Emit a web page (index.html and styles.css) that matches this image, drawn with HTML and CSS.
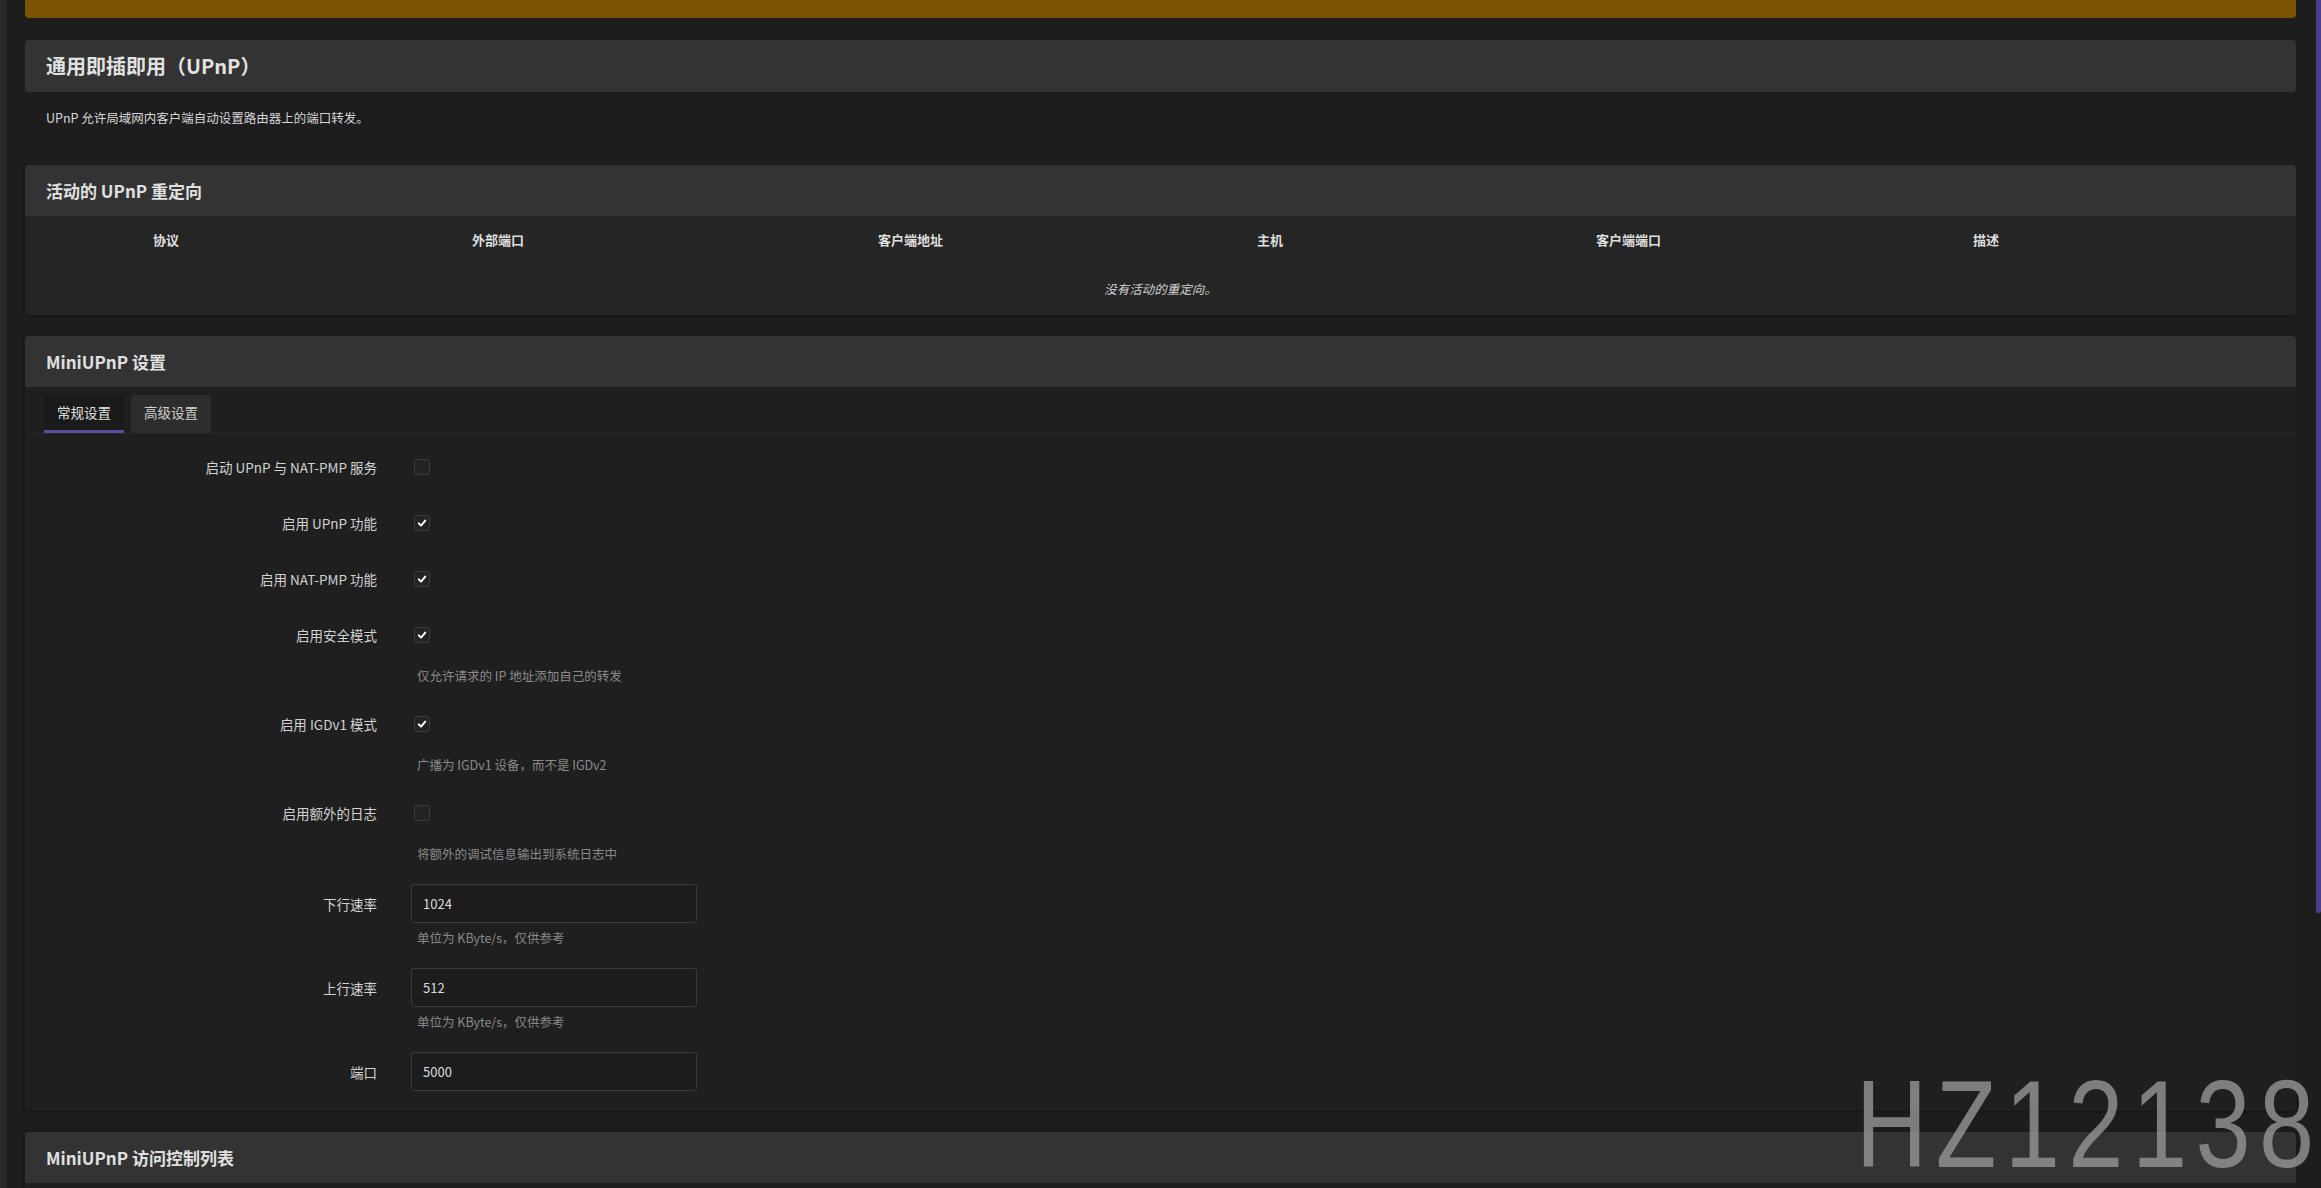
FILE: index.html
```html
<!DOCTYPE html>
<html lang="zh-CN">
<head>
	<meta charset="UTF-8">
	<title>通用即插即用（UPnP）</title>
	<link rel="stylesheet" href="styles.css">
</head>
<body>
<div class="edge"></div>
<div class="main">
	<div class="alert"></div>

	<h2 class="page-title">通用即插即用（UPnP）</h2>
	<div class="page-descr">UPnP 允许局域网内客户端自动设置路由器上的端口转发。</div>

	<!-- 活动的重定向 -->
	<div class="section">
		<h3>活动的 UPnP 重定向</h3>
		<div class="table">
			<div class="thead">
				<div>协议</div>
				<div>外部端口</div>
				<div>客户端地址</div>
				<div>主机</div>
				<div>客户端端口</div>
				<div>描述</div>
			</div>
			<div class="empty">没有活动的重定向。</div>
		</div>
	</div>

	<!-- 设置 -->
	<div class="section">
		<h3>MiniUPnP 设置</h3>
		<div class="section-body">
			<ul class="tabs">
				<li class="active">常规设置</li>
				<li>高级设置</li>
			</ul>
			<div class="form">
				<div class="row">
					<label>启动 UPnP 与 NAT-PMP 服务</label>
					<div class="field"><span class="check"></span></div>
				</div>
				<div class="row">
					<label>启用 UPnP 功能</label>
					<div class="field"><span class="check on"><svg viewBox="0 0 16 16"><path d="M4.3 8.4L6.9 11L11.7 5.3"/></svg></span></div>
				</div>
				<div class="row">
					<label>启用 NAT-PMP 功能</label>
					<div class="field"><span class="check on"><svg viewBox="0 0 16 16"><path d="M4.3 8.4L6.9 11L11.7 5.3"/></svg></span></div>
				</div>
				<div class="row">
					<label>启用安全模式</label>
					<div class="field"><span class="check on"><svg viewBox="0 0 16 16"><path d="M4.3 8.4L6.9 11L11.7 5.3"/></svg></span></div>
					<div class="descr">仅允许请求的 IP 地址添加自己的转发</div>
				</div>
				<div class="row">
					<label>启用 IGDv1 模式</label>
					<div class="field"><span class="check on"><svg viewBox="0 0 16 16"><path d="M4.3 8.4L6.9 11L11.7 5.3"/></svg></span></div>
					<div class="descr">广播为 IGDv1 设备，而不是 IGDv2</div>
				</div>
				<div class="row">
					<label>启用额外的日志</label>
					<div class="field"><span class="check"></span></div>
					<div class="descr">将额外的调试信息输出到系统日志中</div>
				</div>
				<div class="row text">
					<label>下行速率</label>
					<div class="field"><input type="text" value="1024"></div>
					<div class="descr">单位为 KByte/s，仅供参考</div>
				</div>
				<div class="row text">
					<label>上行速率</label>
					<div class="field"><input type="text" value="512"></div>
					<div class="descr">单位为 KByte/s，仅供参考</div>
				</div>
				<div class="row text">
					<label>端口</label>
					<div class="field"><input type="text" value="5000"></div>
				</div>
			</div>
		</div>
	</div>

	<div class="section">
		<h3>MiniUPnP 访问控制列表</h3>
		<div class="section-body tall"></div>
	</div>
</div>
<div class="scrollbar"><div class="thumb"></div></div>

<div class="watermark">HZ12138</div>
</body>
</html>
```

FILE: styles.css
```css
html, body{
	margin: 0;
	height: 100%;
}
body{
	display: flex;
	overflow: hidden;
	background: #1d1d1d;
	color: #d0d0d0;
	font-family: "Noto Sans CJK SC", "Noto Sans", sans-serif;
	font-size: 14px;
}
.edge{
	width: 7px;
	flex-shrink: 0;
	background: #292929;
}
.main{
	flex: 1;
	padding: 0 20px 0 18px;
	min-width: 0;
}
.scrollbar{
	width: 5px;
	flex-shrink: 0;
}
.scrollbar .thumb{
	height: 913px;
	background: #4b3f8c;
	border-radius: 0 0 3px 3px;
}

.alert{
	height: 18px;
	margin-bottom: 22px;
	background: #7a5200;
	border-radius: 0 0 4px 4px;
}
.page-title{
	margin: 0;
	height: 52px;
	line-height: 52px;
	padding: 0 21px;
	background: #333;
	border-radius: 4px;
	font-size: 20px;
	font-weight: bold;
	color: #e2e2e2;
}
.page-descr{
	padding: 17px 21px 0;
	line-height: 18px;
	margin-bottom: 38px;
	font-size: 12.5px;
	color: #d6d6d6;
}

.section{
	margin-bottom: 21px;
	border-radius: 4px;
	background: #1f1f1f;
	box-shadow: 0 1px 3px rgba(0,0,0,.35);
}
.section h3{
	margin: 0;
	height: 51px;
	line-height: 51px;
	padding: 0 21px;
	background: #333;
	border-radius: 4px 4px 0 0;
	font-size: 17px;
	font-weight: bold;
	color: #e0e0e0;
}

.table{
	background: #252525;
	border-radius: 0 0 4px 4px;
}
.thead{
	display: grid;
	grid-template-columns: 319px 406px 379px 339px 377px 1fr;
	padding-left: 128px;
	height: 46px;
	align-items: center;
	font-size: 13px;
	font-weight: bold;
	color: #dedede;
}
.empty{
	height: 53px;
	line-height: 53px;
	text-align: center;
	font-size: 12.5px;
	font-style: italic;
	color: #d0d0d0;
}

.section-body{
	border-radius: 0 0 4px 4px;
}
.section-body.tall{
	height: 300px;
}
.tabs{
	list-style: none;
	margin: 0;
	padding: 8px 0 0 19px;
	display: flex;
	gap: 7px;
	border-bottom: 1px solid #262626;
}
.tabs li{
	height: 35px;
	line-height: 35px;
	padding: 0 13px;
	border-bottom: 3px solid transparent;
	background: #2d2d2d;
	border-radius: 3px 3px 0 0;
	font-size: 13.5px;
	color: #cfcfcf;
}
.tabs li.active{
	background: #1a1a1a;
	border-bottom-color: #5a4e9c;
	color: #e0e0e0;
}

.form{
	padding: 15px 0 20px;
}
.row{
	display: grid;
	grid-template-columns: 352px 1fr;
	column-gap: 34px;
	margin-bottom: 20px;
}
.row:last-child{
	margin-bottom: 0;
}
.row label{
	height: 36px;
	display: flex;
	align-items: center;
	justify-content: flex-end;
	font-size: 13.5px;
	color: #d2d2d2;
}
.row .field{
	height: 36px;
	display: flex;
	align-items: center;
}
.row .descr{
	grid-column: 2;
	margin-top: 12px;
	line-height: 21px;
	padding-left: 6px;
	font-size: 12.5px;
	color: #8a8a8a;
}
.row.text label,
.row.text .field{
	height: 39px;
}
.row.text .descr{
	margin-top: 5px;
	line-height: 20px;
}

.check{
	width: 16px;
	height: 16px;
	margin-left: 3px;
	box-sizing: border-box;
	border: 1px solid #3c3c3c;
	border-radius: 3px;
	background: #232323;
	display: flex;
}
.check svg{
	width: 14px;
	height: 14px;
	fill: none;
	stroke: #fff;
	stroke-width: 2.3;
	stroke-linecap: round;
	stroke-linejoin: round;
}
.field input{
	width: 286px;
	height: 39px;
	box-sizing: border-box;
	padding: 0 11px;
	border: 1px solid #3b3b3b;
	border-radius: 3px;
	background: #1c1c1c;
	color: #dcdcdc;
	font-family: "Noto Sans CJK SC", "Noto Sans", sans-serif;
	font-size: 13px;
	outline: none;
}

.watermark{
	position: fixed;
	right: -2px;
	top: 1062px;
	font-family: "Liberation Sans", Arial, sans-serif;
	font-size: 124px;
	line-height: 1;
	letter-spacing: 10.5px;
	white-space: nowrap;
	color: rgba(150,150,150,.8);
	transform: scaleX(.8);
	transform-origin: right top;
	pointer-events: none;
}
```
